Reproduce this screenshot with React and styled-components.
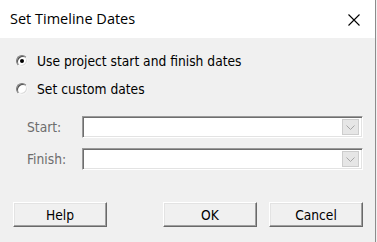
import styled, { createGlobalStyle } from 'styled-components'

const Global = createGlobalStyle`
  html, body { margin: 0; padding: 0; background: #f0f0f0; }
  body { width: 377px; height: 242px; overflow: hidden; }
`

export default function App () {
  return (
    <>
      <Global />
      <Window>
        <TitleBar>
          <Title>Set Timeline Dates</Title>
          <Close aria-label='Close'>
            <svg width='12' height='12' viewBox='0 0 12 12'>
              <path d='M0.5 0.5 L11.5 11.5 M11.5 0.5 L0.5 11.5' stroke='#000' strokeWidth='1.1' fill='none' />
            </svg>
          </Close>
        </TitleBar>
        <Body>
          <Options>
            <Option>
              <Radio checked />
              <OptionText>Use project start and finish dates</OptionText>
            </Option>
            <Option>
              <Radio />
              <OptionText>Set custom dates</OptionText>
            </Option>
          </Options>
          <Fields>
            <Label>Start:</Label>
            <Combo>
              <DropButton>
                <svg width='9' height='5' viewBox='0 0 9 5'>
                  <path d='M0.5 0.5 L4.5 4.5 L8.5 0.5' stroke='#a6a6a6' strokeWidth='1' fill='none' />
                </svg>
              </DropButton>
            </Combo>
            <Label>Finish:</Label>
            <Combo>
              <DropButton>
                <svg width='9' height='5' viewBox='0 0 9 5'>
                  <path d='M0.5 0.5 L4.5 4.5 L8.5 0.5' stroke='#a6a6a6' strokeWidth='1' fill='none' />
                </svg>
              </DropButton>
            </Combo>
          </Fields>
          <Footer>
            <Button>Help</Button>
            <Spacer />
            <Button>OK</Button>
            <Button>Cancel</Button>
          </Footer>
        </Body>
      </Window>
    </>
  )
}

const Window = styled.div`
  width: 375px;
  height: 242px;
  border-right: 1px solid #8c8c8c;
  background: #f0f0f0;
  display: flex;
  flex-direction: column;
  font-family: "DejaVu Sans Condensed", "DejaVu Sans", sans-serif;
  font-size: 13.7px;
  color: #000;
`

const TitleBar = styled.div`
  height: 38px;
  background: #fff;
  display: flex;
  align-items: center;
  justify-content: space-between;
  padding: 0 15px 0 10px;
  box-sizing: border-box;
`

const Title = styled.span`
  font-family: "Open Sans", "Noto Sans", sans-serif;
  font-size: 14.5px;
  color: #000;
  margin-top: -2px;
`

const Close = styled.span`
  display: flex;
  width: 12px;
  height: 12px;
  margin-top: 1px;
`

const Body = styled.div`
  padding: 13px 12px 0 13px;
  display: flex;
  flex-direction: column;
`

const Options = styled.div`
  display: flex;
  flex-direction: column;
  gap: 8px;
  padding-left: 3px;
`

const Option = styled.div`
  display: flex;
  align-items: center;
  height: 20px;
  gap: 9px;
`

const Radio = styled.span`
  position: relative;
  flex: none;
  width: 12px;
  height: 12px;
  box-sizing: border-box;
  border-radius: 50%;
  background: #fff;
  border: 1px solid;
  border-color: #7a7a7a #f4f4f4 #f4f4f4 #7a7a7a;
  box-shadow: inset 1px 1px 0 #505050, inset -1px -1px 0 #dcdcdc;
  &::after {
    content: '';
    display: ${p => (p.checked ? 'block' : 'none')};
    position: absolute;
    left: 3px;
    top: 3px;
    width: 4px;
    height: 4px;
    border-radius: 50%;
    background: #000;
  }
`

const OptionText = styled.span`
  white-space: nowrap;
`

const Fields = styled.div`
  display: grid;
  grid-template-columns: 55px 1fr;
  row-gap: 10px;
  align-items: center;
  margin-top: 17px;
  padding-left: 14px;
`

const Label = styled.span`
  color: #6d6d6d;
`

const Combo = styled.div`
  height: 22px;
  box-sizing: border-box;
  background: #fff;
  border: 1px solid;
  border-color: #9a9a9a #fff #fff #9a9a9a;
  box-shadow: inset 1px 1px 0 #6e6e6e, inset -1px -1px 0 #e3e3e3;
  display: flex;
  align-items: center;
  justify-content: flex-end;
  padding-right: 3px;
`

const DropButton = styled.span`
  width: 17px;
  height: 16px;
  box-sizing: border-box;
  background: #e6e6e6;
  border: 1px solid #cdcdcd;
  display: flex;
  align-items: center;
  justify-content: center;
  padding-top: 1px;
`

const Footer = styled.div`
  display: flex;
  gap: 12px;
  margin-top: 32px;
`

const Spacer = styled.div`
  flex: 1;
`

const Button = styled.div`
  width: 94px;
  height: 25px;
  box-sizing: border-box;
  background: #f0f0f0;
  border: 1px solid;
  border-color: #fff #696969 #696969 #fff;
  box-shadow: inset -1px -1px 0 #a0a0a0, inset 1px 1px 0 #e3e3e3;
  display: flex;
  align-items: center;
  justify-content: center;
`
